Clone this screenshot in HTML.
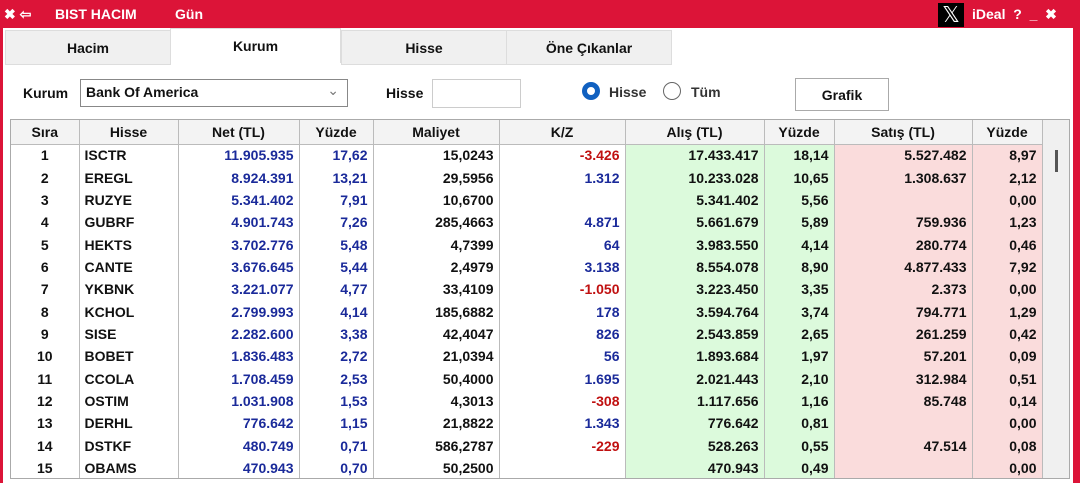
<!DOCTYPE html><html><head><style>
*{margin:0;padding:0;box-sizing:border-box}
body{width:1080px;height:483px;overflow:hidden;background:#dc1438;font-family:"Liberation Sans",sans-serif;font-weight:bold;font-size:14px;position:relative;color:#111}
.t{position:absolute;color:#fff;font-size:14px;top:6px}
.main{position:absolute;left:3px;top:28px;width:1070px;height:455px;background:#fff}
.tab{position:absolute;top:2px;height:35px;background:#f0f0f0;border:1px solid #ddd;text-align:center;line-height:34px;font-size:14px}
.tbl{position:absolute;left:7px;top:91px;width:1060px;height:360px;border:1px solid #aaa;background:#f0f0f0;overflow:hidden}
table{border-collapse:collapse;position:absolute;left:0;top:0;font-size:14px}
td,th{height:22.36px;padding:0 5px;border-right:1px solid #bbb}
th{height:24px;background:#f3f3f3;border-bottom:1px solid #bbb;font-weight:bold;text-align:center}
td{text-align:right;background:#fff}
td.c{text-align:center}td.l{text-align:left}
.b{color:#1a2a9a}.r{color:#c01010}
.g{background:#dcfadc}.p{background:#fadcdc}
</style></head><body>
<div class="t" style="left:4px">✖ ⇦</div>
<div class="t" style="left:55px">BIST HACIM</div>
<div class="t" style="left:175px">Gün</div>
<div style="position:absolute;left:938px;top:3px;width:26px;height:24px;background:#000;color:#fff;font-size:22px;text-align:center;line-height:24px;font-weight:normal">𝕏</div>
<div class="t" style="left:972px">iDeal&nbsp; ?&nbsp; _&nbsp; ✖</div>
<div class="main">
<div class="tab" style="left:2px;width:166px">Hacim</div>
<div class="tab" style="left:167px;width:171px;background:#fff;border-bottom:none;top:0;line-height:34px">Kurum</div>
<div class="tab" style="left:338px;width:166px">Hisse</div>
<div class="tab" style="left:503px;width:166px">Öne Çıkanlar</div>
<div style="position:absolute;left:20px;top:57px">Kurum</div>
<div style="position:absolute;left:77px;top:51px;width:268px;height:28px;border:1px solid #888;padding:4px 5px">Bank Of America<span style="position:absolute;right:8px;top:2px;color:#777;font-weight:normal">⌄</span></div>
<div style="position:absolute;left:383px;top:57px">Hisse</div>
<div style="position:absolute;left:429px;top:51px;width:89px;height:29px;border:1px solid #ccc"></div>
<div style="position:absolute;left:579px;top:54px;width:18px;height:18px;border-radius:50%;border:5px solid #1060c0"></div>
<div style="position:absolute;left:606px;top:56px;color:#333">Hisse</div>
<div style="position:absolute;left:660px;top:54px;width:18px;height:18px;border-radius:50%;border:1px solid #666"></div>
<div style="position:absolute;left:688px;top:56px;color:#333">Tüm</div>
<div style="position:absolute;left:792px;top:50px;width:94px;height:33px;border:1px solid #aaa;text-align:center;line-height:32px">Grafik</div>
<div class="tbl">
<div style="position:absolute;left:1044px;top:30px;width:3px;height:22px;background:#555"></div>
<table>
<colgroup><col style="width:68px"><col style="width:99px"><col style="width:121px"><col style="width:74px"><col style="width:126px"><col style="width:126px"><col style="width:139px"><col style="width:70px"><col style="width:138px"><col style="width:70px"></colgroup>
<tr><th>Sıra</th><th>Hisse</th><th>Net (TL)</th><th>Yüzde</th><th>Maliyet</th><th>K/Z</th><th>Alış (TL)</th><th>Yüzde</th><th>Satış (TL)</th><th>Yüzde</th></tr>
<tr><td class="c">1</td><td class="l">ISCTR</td><td class="b">11.905.935</td><td class="b">17,62</td><td>15,0243</td><td class="r">-3.426</td><td class="g">17.433.417</td><td class="g">18,14</td><td class="p">5.527.482</td><td class="p">8,97</td></tr>
<tr><td class="c">2</td><td class="l">EREGL</td><td class="b">8.924.391</td><td class="b">13,21</td><td>29,5956</td><td class="b">1.312</td><td class="g">10.233.028</td><td class="g">10,65</td><td class="p">1.308.637</td><td class="p">2,12</td></tr>
<tr><td class="c">3</td><td class="l">RUZYE</td><td class="b">5.341.402</td><td class="b">7,91</td><td>10,6700</td><td></td><td class="g">5.341.402</td><td class="g">5,56</td><td class="p"></td><td class="p">0,00</td></tr>
<tr><td class="c">4</td><td class="l">GUBRF</td><td class="b">4.901.743</td><td class="b">7,26</td><td>285,4663</td><td class="b">4.871</td><td class="g">5.661.679</td><td class="g">5,89</td><td class="p">759.936</td><td class="p">1,23</td></tr>
<tr><td class="c">5</td><td class="l">HEKTS</td><td class="b">3.702.776</td><td class="b">5,48</td><td>4,7399</td><td class="b">64</td><td class="g">3.983.550</td><td class="g">4,14</td><td class="p">280.774</td><td class="p">0,46</td></tr>
<tr><td class="c">6</td><td class="l">CANTE</td><td class="b">3.676.645</td><td class="b">5,44</td><td>2,4979</td><td class="b">3.138</td><td class="g">8.554.078</td><td class="g">8,90</td><td class="p">4.877.433</td><td class="p">7,92</td></tr>
<tr><td class="c">7</td><td class="l">YKBNK</td><td class="b">3.221.077</td><td class="b">4,77</td><td>33,4109</td><td class="r">-1.050</td><td class="g">3.223.450</td><td class="g">3,35</td><td class="p">2.373</td><td class="p">0,00</td></tr>
<tr><td class="c">8</td><td class="l">KCHOL</td><td class="b">2.799.993</td><td class="b">4,14</td><td>185,6882</td><td class="b">178</td><td class="g">3.594.764</td><td class="g">3,74</td><td class="p">794.771</td><td class="p">1,29</td></tr>
<tr><td class="c">9</td><td class="l">SISE</td><td class="b">2.282.600</td><td class="b">3,38</td><td>42,4047</td><td class="b">826</td><td class="g">2.543.859</td><td class="g">2,65</td><td class="p">261.259</td><td class="p">0,42</td></tr>
<tr><td class="c">10</td><td class="l">BOBET</td><td class="b">1.836.483</td><td class="b">2,72</td><td>21,0394</td><td class="b">56</td><td class="g">1.893.684</td><td class="g">1,97</td><td class="p">57.201</td><td class="p">0,09</td></tr>
<tr><td class="c">11</td><td class="l">CCOLA</td><td class="b">1.708.459</td><td class="b">2,53</td><td>50,4000</td><td class="b">1.695</td><td class="g">2.021.443</td><td class="g">2,10</td><td class="p">312.984</td><td class="p">0,51</td></tr>
<tr><td class="c">12</td><td class="l">OSTIM</td><td class="b">1.031.908</td><td class="b">1,53</td><td>4,3013</td><td class="r">-308</td><td class="g">1.117.656</td><td class="g">1,16</td><td class="p">85.748</td><td class="p">0,14</td></tr>
<tr><td class="c">13</td><td class="l">DERHL</td><td class="b">776.642</td><td class="b">1,15</td><td>21,8822</td><td class="b">1.343</td><td class="g">776.642</td><td class="g">0,81</td><td class="p"></td><td class="p">0,00</td></tr>
<tr><td class="c">14</td><td class="l">DSTKF</td><td class="b">480.749</td><td class="b">0,71</td><td>586,2787</td><td class="r">-229</td><td class="g">528.263</td><td class="g">0,55</td><td class="p">47.514</td><td class="p">0,08</td></tr>
<tr><td class="c">15</td><td class="l">OBAMS</td><td class="b">470.943</td><td class="b">0,70</td><td>50,2500</td><td></td><td class="g">470.943</td><td class="g">0,49</td><td class="p"></td><td class="p">0,00</td></tr>
</table></div></div>
</body></html>
